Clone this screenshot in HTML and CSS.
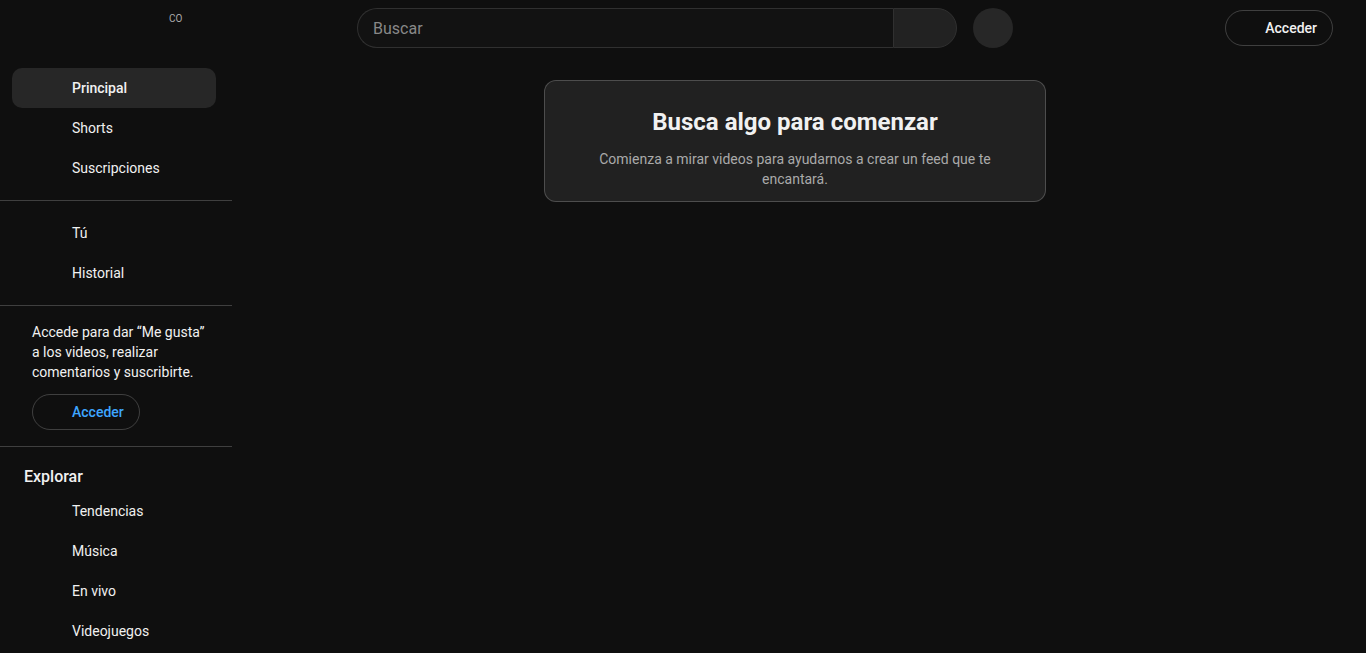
FILE: index.html
```html
<!DOCTYPE html>
<html lang="es">
<head>
<meta charset="utf-8">
<title>YouTube</title>
<link rel="stylesheet" href="styles.css">
</head>
<body>
<div class="app">
  <header class="header">
    <div class="start">
      <span class="country">CO</span>
    </div>
    <div class="center">
      <form class="search">
        <input class="search-input" type="text" placeholder="Buscar">
        <button class="search-btn" type="button"></button>
      </form>
      <button class="voice-btn" type="button"></button>
    </div>
    <div class="end">
      <a class="signin-btn" href="#"><span class="btn-icon"></span>Acceder</a>
    </div>
  </header>
  <div class="body">
    <nav class="guide">
      <div class="section">
        <a class="entry active" href="#"><span class="entry-icon"></span>Principal</a>
        <a class="entry" href="#"><span class="entry-icon"></span>Shorts</a>
        <a class="entry" href="#"><span class="entry-icon"></span>Suscripciones</a>
      </div>
      <div class="sep"></div>
      <div class="section">
        <a class="entry" href="#"><span class="entry-icon"></span>Tú</a>
        <a class="entry" href="#"><span class="entry-icon"></span>Historial</a>
      </div>
      <div class="sep"></div>
      <div class="signin">
        <p class="signin-text">Accede para dar “Me gusta” a los videos, realizar comentarios y suscribirte.</p>
        <a class="signin-btn blue" href="#"><span class="btn-icon"></span>Acceder</a>
      </div>
      <div class="sep"></div>
      <div class="section">
        <h3 class="section-title">Explorar</h3>
        <a class="entry" href="#"><span class="entry-icon"></span>Tendencias</a>
        <a class="entry" href="#"><span class="entry-icon"></span>Música</a>
        <a class="entry" href="#"><span class="entry-icon"></span>En vivo</a>
        <a class="entry" href="#"><span class="entry-icon"></span>Videojuegos</a>
      </div>
    </nav>
    <main class="main">
      <div class="nudge">
        <h2 class="nudge-title">Busca algo para comenzar</h2>
        <p class="nudge-sub">Comienza a mirar videos para ayudarnos a crear un feed que te encantará.</p>
      </div>
    </main>
  </div>
</div>
</body>
</html>
```

FILE: styles.css
```css
* { box-sizing: border-box; }
html, body {
  margin: 0;
  padding: 0;
  height: 100%;
  overflow: hidden;
  background: #0f0f0f;
  color: #f1f1f1;
  font-family: Roboto, "Noto Sans", Arial, sans-serif;
}
a { color: inherit; text-decoration: none; }

.app {
  height: 100vh;
  display: flex;
  flex-direction: column;
}

.header {
  height: 56px;
  flex: 0 0 56px;
  display: flex;
  align-items: center;
  padding: 0 33px 0 16px;
}
.start {
  width: 341px;
  align-self: stretch;
  display: flex;
  align-items: flex-start;
  padding: 12px 0 0 153px;
}
.country {
  font-size: 10px;
  line-height: 14px;
  color: #aaaaaa;
}
.center {
  display: flex;
  align-items: center;
}
.search {
  display: flex;
  width: 600px;
  height: 40px;
  margin: 0;
}
.search-input {
  flex: 1;
  height: 40px;
  background: #121212;
  border: 1px solid #303030;
  border-right: none;
  border-radius: 40px 0 0 40px;
  padding: 0 4px 0 15px;
  color: #f1f1f1;
  font-family: Roboto, "Noto Sans", Arial, sans-serif;
  font-size: 16px;
  outline: none;
}
.search-input::placeholder { color: #888888; }
.search-btn {
  width: 64px;
  height: 40px;
  background: #222222;
  border: 1px solid #303030;
  border-radius: 0 40px 40px 0;
  padding: 0;
}
.voice-btn {
  width: 40px;
  height: 40px;
  margin-left: 16px;
  border: none;
  border-radius: 50%;
  background: #272727;
  padding: 0;
}
.end {
  margin-left: auto;
  display: flex;
  align-items: center;
}
.signin-btn {
  display: inline-flex;
  align-items: center;
  height: 36px;
  padding: 0 15px 0 9px;
  border: 1px solid rgba(255, 255, 255, 0.2);
  border-radius: 18px;
  font-size: 14px;
  font-weight: 500;
  color: #f1f1f1;
}
.signin-btn.blue { color: #3ea6ff; }
.btn-icon {
  width: 24px;
  height: 24px;
  margin-right: 6px;
}

.body {
  flex: 1;
  display: flex;
  min-height: 0;
}
.guide {
  width: 240px;
  flex: 0 0 240px;
  overflow: hidden;
}
.section {
  padding: 12px 24px 12px 12px;
  display: flex;
  flex-direction: column;
}
.sep {
  width: 232px;
  height: 1px;
  background: rgba(255, 255, 255, 0.2);
}
.entry {
  display: flex;
  align-items: center;
  height: 40px;
  padding: 0 12px;
  border-radius: 10px;
  font-size: 14px;
  line-height: 20px;
  color: #f1f1f1;
}
.entry.active {
  background: #272727;
  font-weight: 500;
}
.entry-icon {
  width: 24px;
  height: 24px;
  margin-right: 24px;
}
.section-title {
  margin: 0;
  padding: 7px 12px 3px;
  font-size: 16px;
  line-height: 22px;
  font-weight: 500;
}
.signin {
  padding: 16px 32px;
}
.signin-text {
  margin: 0 0 12px;
  font-size: 14px;
  line-height: 20px;
}

.main {
  flex: 1;
  padding: 24px 16px 0 0;
  display: flex;
  justify-content: center;
  align-items: flex-start;
}
.nudge {
  width: 502px;
  background: #212121;
  border: 1px solid rgba(255, 255, 255, 0.2);
  border-radius: 12px;
  padding: 23px 24px 12px;
  text-align: center;
}
.nudge-title {
  margin: 0;
  font-size: 24px;
  line-height: 36px;
  font-weight: 700;
  color: #f1f1f1;
}
.nudge-sub {
  margin: 9px 0 0;
  font-size: 14px;
  line-height: 20px;
  color: #aaaaaa;
}
```
